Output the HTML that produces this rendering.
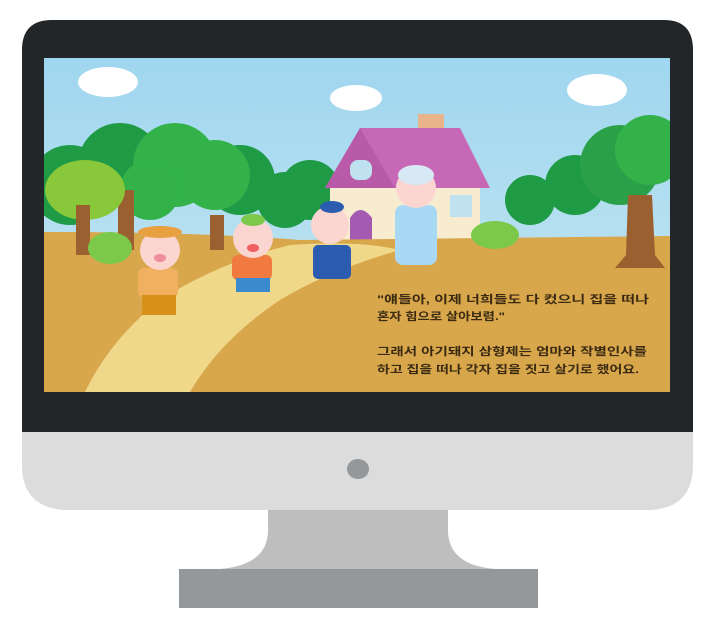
<!DOCTYPE html>
<html><head><meta charset="utf-8"><style>
html,body{margin:0;padding:0;background:#fff;width:716px;height:628px;overflow:hidden}
svg{display:block}
text{font-family:"Liberation Sans","Noto Sans CJK KR","NanumGothic",sans-serif}
</style></head><body>
<svg width="716" height="628" viewBox="0 0 716 628" xmlns="http://www.w3.org/2000/svg">
<defs>
<linearGradient id="sky" x1="0" y1="0" x2="0" y2="1"><stop offset="0" stop-color="#9fd6ef"/><stop offset="1" stop-color="#c9e8f2"/></linearGradient>
<clipPath id="scr"><rect x="44" y="58" width="626" height="334"/></clipPath>
</defs>
<path d="M268 505 L448 505 L448 530 Q448 565 495 569 L538 569 L538 608 L179 608 L179 569 L220 569 Q268 565 268 530 Z" fill="#bebebe"/>
<rect x="179" y="569" width="359" height="39" fill="#94989a"/>
<path d="M22 430 L693 430 L693 465 Q693 508 650 510 L66 510 Q22 508 22 465 Z" fill="#dcdcdc"/>
<ellipse cx="358" cy="469" rx="11" ry="10" fill="#94989a"/>
<path d="M22 50 Q22 20 52 20 L664 20 Q693 20 693 50 L693 432 L22 432 Z" fill="#222629"/>
<g clip-path="url(#scr)">
<rect x="44" y="58" width="626" height="334" fill="url(#sky)"/>
<g fill="#fff"><ellipse cx="108" cy="82" rx="30" ry="15"/><ellipse cx="356" cy="98" rx="26" ry="13"/><ellipse cx="597" cy="90" rx="30" ry="16"/></g>
<g fill="#1f9a45"><circle cx="70" cy="185" r="40"/><circle cx="120" cy="165" r="42"/><circle cx="240" cy="180" r="35"/><circle cx="285" cy="200" r="28"/><circle cx="310" cy="190" r="30"/><circle cx="530" cy="200" r="25"/><circle cx="575" cy="185" r="30"/></g>
<g fill="#33b24a"><circle cx="175" cy="165" r="42"/><circle cx="215" cy="175" r="35"/><circle cx="150" cy="190" r="30"/></g>
<rect x="418" y="114" width="26" height="16" fill="#e8b48a"/>
<rect x="330" y="180" width="150" height="62" fill="#f8ecd0"/>
<polygon points="325,188 360,128 460,128 490,188" fill="#c668b6"/>
<polygon points="325,188 360,128 395,188" fill="#b95aa9"/>
<rect x="350" y="160" width="22" height="20" rx="8" fill="#bfe1f0"/>
<path d="M350 242 L350 218 Q360 202 372 218 L372 242 Z" fill="#a45ab0"/>
<rect x="450" y="195" width="22" height="22" fill="#bfe1f0"/>
<path d="M44 232 Q200 232 300 240 L670 236 L670 392 L44 392 Z" fill="#d8a74c"/>
<path d="M290 245 Q360 240 400 250 Q330 270 280 300 Q220 340 190 392 L85 392 Q110 340 160 300 Q220 262 290 245 Z" fill="#f0d88a"/>
<rect x="118" y="190" width="16" height="60" fill="#9a6030"/>
<rect x="210" y="215" width="14" height="35" fill="#9a6030"/>
<ellipse cx="85" cy="190" rx="40" ry="30" fill="#88c83a"/>
<rect x="76" y="205" width="14" height="50" fill="#9a6030"/>
<ellipse cx="110" cy="248" rx="22" ry="16" fill="#7cc84a"/>
<ellipse cx="495" cy="235" rx="24" ry="14" fill="#7cc84a"/>
<circle cx="620" cy="165" r="40" fill="#2aa048"/><circle cx="650" cy="150" r="35" fill="#33b24a"/>
<path d="M628 195 L652 195 L655 255 L665 268 L615 268 L626 255 Z" fill="#9a6030"/>
<g>
<rect x="138" y="268" width="40" height="30" rx="6" fill="#f0b060"/>
<rect x="142" y="295" width="34" height="20" fill="#d8901a"/>
<circle cx="160" cy="250" r="20" fill="#fbd5d0"/><ellipse cx="160" cy="232" rx="22" ry="6" fill="#e8a040"/>
<ellipse cx="160" cy="258" rx="6" ry="4" fill="#f08ca0"/>
<rect x="232" y="255" width="40" height="25" rx="6" fill="#f07a40"/>
<rect x="236" y="278" width="34" height="14" fill="#3a8ad0"/>
<circle cx="253" cy="238" r="20" fill="#fbd5d0"/><ellipse cx="253" cy="220" rx="12" ry="6" fill="#7cc84a"/>
<ellipse cx="253" cy="248" rx="6" ry="4" fill="#f06060"/>
<rect x="313" y="245" width="38" height="34" rx="5" fill="#2c5cb0"/>
<circle cx="330" cy="225" r="19" fill="#fbd5d0"/><ellipse cx="332" cy="207" rx="12" ry="6" fill="#2c5cb0"/>
<rect x="395" y="205" width="42" height="60" rx="8" fill="#a8d8f4"/>
<circle cx="416" cy="188" r="20" fill="#fbd5d0"/><ellipse cx="416" cy="175" rx="18" ry="10" fill="#d8e8f4"/>
</g>
<g fill="#3a2a12" font-size="11" font-weight="bold">
<text x="377" y="303" textLength="272" lengthAdjust="spacingAndGlyphs">"얘들아, 이제 너희들도 다 컸으니 집을 떠나</text>
<text x="377" y="320" textLength="128" lengthAdjust="spacingAndGlyphs">혼자 힘으로 살아보렴."</text>
<text x="377" y="355" textLength="270" lengthAdjust="spacingAndGlyphs">그래서 아기돼지 삼형제는 엄마와 작별인사를</text>
<text x="377" y="373" textLength="262" lengthAdjust="spacingAndGlyphs">하고 집을 떠나 각자 집을 짓고 살기로 했어요.</text>
</g>
</g>
</svg>
</body></html>
